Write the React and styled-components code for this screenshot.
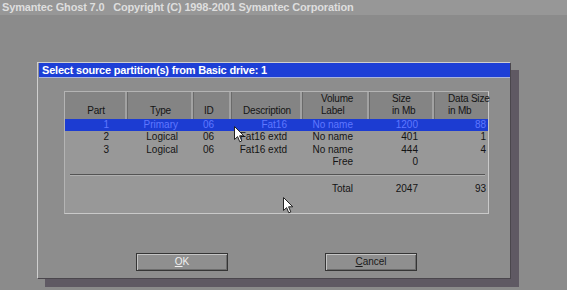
import React from 'react'
import styled, { createGlobalStyle } from 'styled-components'

const columns = [
    { key: 'part', head: ['Part'], width: 63, headAlign: 'center', headPad: 0, pad: 19 },
    { key: 'type', head: ['Type'], width: 66, headAlign: 'center', headPad: 0, pad: 16 },
    { key: 'id', head: ['ID'], width: 38, headAlign: 'left', headPad: 10, pad: 18 },
    { key: 'desc', head: ['Description'], width: 71, headAlign: 'center', headPad: 0, pad: 16 },
    { key: 'label', head: ['Volume', 'Label'], width: 67, headAlign: 'left', headPad: 18, pad: 17 },
    { key: 'size', head: ['Size', 'in Mb'], width: 65, headAlign: 'left', headPad: 22, pad: 17 },
    { key: 'data', head: ['Data Size', 'in Mb'], width: 55, headAlign: 'left', headPad: 13, pad: 4 },
]

const rows = [
    { part: '1', type: 'Primary', id: '06', desc: 'Fat16', label: 'No name', size: '1200', data: '88', selected: true },
    { part: '2', type: 'Logical', id: '06', desc: 'Fat16 extd', label: 'No name', size: '401', data: '1' },
    { part: '3', type: 'Logical', id: '06', desc: 'Fat16 extd', label: 'No name', size: '444', data: '4' },
    { part: '', type: '', id: '', desc: '', label: 'Free', size: '0', data: '' },
]

const total = { part: '', type: '', id: '', desc: '', label: 'Total', size: '2047', data: '93' }

const gridCols = columns.map(c => c.width + 'px').join(' ')

function Cursor({ x, y }) {
    return (
        <CursorMark x={x} y={y} width="11" height="17" viewBox="0 0 11 17">
            <path d="M0.5 0.5 L0.5 13.5 L3.6 10.6 L5.8 15.8 L7.8 14.9 L5.6 9.8 L9.8 9.8 Z" fill="#fff" stroke="#222" strokeWidth="1" />
        </CursorMark>
    )
}

function App() {
    return (
        <>
            <GlobalStyle />
            <Screen>
                <TopBar>Symantec Ghost 7.0&nbsp;&nbsp;&nbsp;Copyright (C) 1998-2001 Symantec Corporation</TopBar>
                <Dialog>
                    <TitleBar>Select source partition(s) from Basic drive: 1</TitleBar>
                    <Panel>
                        <HeaderRow>
                            {columns.map(c => (
                                <HeadCell key={c.key} align={c.headAlign} pad={c.headPad}>
                                    {c.head.map(line => <span key={line}>{line}</span>)}
                                </HeadCell>
                            ))}
                        </HeaderRow>
                        {rows.map((r, i) => (
                            <Row key={i} selected={r.selected}>
                                {columns.map(c => <Cell key={c.key} pad={c.pad}>{r[c.key]}</Cell>)}
                            </Row>
                        ))}
                        <Separator />
                        <TotalRow>
                            {columns.map(c => <Cell key={c.key} pad={c.pad}>{total[c.key]}</Cell>)}
                        </TotalRow>
                    </Panel>
                    <Buttons>
                        <Button focused><u>O</u>K</Button>
                        <Button><u>C</u>ancel</Button>
                    </Buttons>
                </Dialog>
                <Cursor x={234} y={126} />
                <Cursor x={283} y={197} />
            </Screen>
        </>
    )
}

export default App

const GlobalStyle = createGlobalStyle`
    html, body {
        margin: 0;
        padding: 0;
    }
    body {
        background: #8b8b8b;
        font-family: "Liberation Sans", Arial, sans-serif;
        overflow: hidden;
    }
`

const Screen = styled.div`
    position: relative;
    width: 567px;
    height: 290px;
    background: #8b8b8b;
    overflow: hidden;
`

const TopBar = styled.div`
    height: 15px;
    line-height: 14px;
    padding-left: 2px;
    background: #979797;
    color: #dedede;
    font-size: 11px;
    font-weight: bold;
    letter-spacing: -0.15px;
    white-space: nowrap;
`

const Dialog = styled.div`
    margin: 47px 0 0 37px;
    width: 474px;
    height: 217px;
    box-sizing: border-box;
    background: #8d8d8d;
    border-top: 1px solid #cfcfcf;
    border-left: 1px solid #cfcfcf;
    border-right: 1px solid #4a464c;
    border-bottom: 1px solid #4a464c;
    box-shadow: 8px 8px 0 #5f5963;
`

const TitleBar = styled.div`
    margin-left: 1px;
    height: 14px;
    line-height: 14px;
    padding-left: 3px;
    background: #1d3fd6;
    color: #fff;
    font-size: 11px;
    font-weight: bold;
    letter-spacing: -0.2px;
    white-space: nowrap;
    border-bottom: 1px solid #a9b4dc;
`

const Panel = styled.div`
    margin: 13px 0 0 26px;
    width: 425px;
    height: 123px;
    box-sizing: border-box;
    background: #989898;
    border: 1px solid #c9c9c9;
    border-top-color: #b4b4b4;
    border-left-color: #b4b4b4;
    font-size: 10px;
    color: #141414;
`

const HeaderRow = styled.div`
    display: grid;
    grid-template-columns: ${gridCols};
    grid-template-rows: 27px;
    height: 27px;
    background: #848484;
`

const HeadCell = styled.div`
    display: flex;
    flex-direction: column;
    justify-content: flex-end;
    align-items: ${p => (p.align === 'center' ? 'center' : 'flex-start')};
    padding-left: ${p => p.pad}px;
    padding-bottom: 2px;
    line-height: 12px;
    letter-spacing: -0.2px;
    white-space: nowrap;
    overflow: hidden;
    border-right: 1px solid #6a6a6a;
    box-shadow: inset -2px 0 0 #a2a2a2;
    &:last-child {
        border-right: none;
        box-shadow: none;
    }
`

const Row = styled.div`
    display: grid;
    grid-template-columns: ${gridCols};
    height: 12.4px;
    line-height: 12.4px;
    background: ${p => (p.selected ? '#1c3cd2' : 'transparent')};
    color: ${p => (p.selected ? '#5f77ff' : '#141414')};
`

const Cell = styled.div`
    text-align: right;
    padding-right: ${p => p.pad}px;
    white-space: nowrap;
`

const Separator = styled.div`
    margin: 5px 3px 0 5px;
    border-top: 1px solid #545454;
    border-bottom: 1px solid #b0b0b0;
`

const TotalRow = styled(Row)`
    margin-top: 7px;
`

const Buttons = styled.div`
    display: flex;
    gap: 97px;
    margin: 39px 0 0 98px;
`

const Button = styled.div`
    width: 92px;
    height: 18px;
    box-sizing: border-box;
    border: 1px solid #353535;
    background: #8f8f8f;
    box-shadow: inset 1px 1px 0 #c4c4c4, inset -1px -1px 0 #6c6c6c;
    color: ${p => (p.focused ? '#f0f0f0' : '#1a1a1a')};
    font-size: 10px;
    line-height: 16px;
    text-align: center;
`

const CursorMark = styled.svg`
    position: absolute;
    left: ${p => p.x}px;
    top: ${p => p.y}px;
`
